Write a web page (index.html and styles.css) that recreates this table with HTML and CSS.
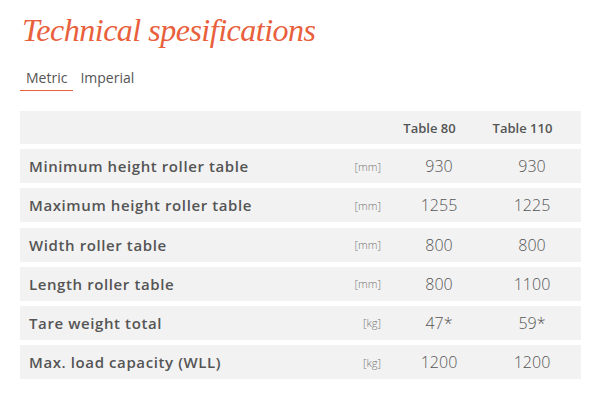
FILE: index.html
```html
<!DOCTYPE html>
<html>
<head>
<meta charset="utf-8">
<link rel="stylesheet" href="styles.css">
</head>
<body>
<div class="page">
  <h1 class="title">Technical spesifications</h1>
  <div class="tabs">
    <span class="tab active">Metric</span>
    <span class="tab">Imperial</span>
  </div>
  <div class="spec">
    <div class="row head">
      <div class="label"></div>
      <div class="unit"></div>
      <div class="val hv">Table 80</div>
      <div class="val hv">Table 110</div>
    </div>
    <div class="row">
      <div class="label">Minimum height roller table</div>
      <div class="unit">[mm]</div>
      <div class="val">930</div>
      <div class="val">930</div>
    </div>
    <div class="row">
      <div class="label">Maximum height roller table</div>
      <div class="unit">[mm]</div>
      <div class="val">1255</div>
      <div class="val">1225</div>
    </div>
    <div class="row">
      <div class="label">Width roller table</div>
      <div class="unit">[mm]</div>
      <div class="val">800</div>
      <div class="val">800</div>
    </div>
    <div class="row">
      <div class="label">Length roller table</div>
      <div class="unit">[mm]</div>
      <div class="val">800</div>
      <div class="val">1100</div>
    </div>
    <div class="row">
      <div class="label">Tare weight total</div>
      <div class="unit">[kg]</div>
      <div class="val">47*</div>
      <div class="val">59*</div>
    </div>
    <div class="row">
      <div class="label">Max. load capacity (WLL)</div>
      <div class="unit">[kg]</div>
      <div class="val">1200</div>
      <div class="val">1200</div>
    </div>
  </div>
</div>
</body>
</html>
```
FILE: styles.css
```css
html, body {
  margin: 0;
  padding: 0;
  background: #ffffff;
}
.page {
  padding: 0 25px 0 20px;
  font-family: "Open Sans", "Liberation Sans", sans-serif;
  color: #555555;
}
.title {
  margin: 0;
  padding-top: 10px;
  padding-left: 2px;
  font-family: "Liberation Serif", serif;
  font-style: italic;
  font-weight: normal;
  font-size: 32px;
  letter-spacing: -0.5px;
  line-height: 40px;
  color: #e8603c;
}
.tabs {
  display: flex;
  margin-top: 18px;
  height: 23px;
}
.tab {
  font-size: 14px;
  line-height: 19px;
  color: #555;
  padding: 0 0 0 7px;
}
.tab.active {
  padding: 0 6px 0 6px;
  border-bottom: 1.5px solid #e8603c;
}
.spec {
  margin-top: 20px;
  display: flex;
  flex-direction: column;
  gap: 5.2px;
}
.row {
  display: grid;
  grid-template-columns: 1fr auto 88px 98px;
  align-items: center;
  height: 34px;
  background: #f2f2f2;
}
.row.head {
  height: 33px;
}
.label {
  padding-left: 9px;
  font-size: 15px;
  font-weight: 600;
  letter-spacing: 0.6px;
  color: #555;
}
.unit {
  padding-right: 14px;
  font-size: 11px;
  font-weight: 300;
  color: #777;
  text-align: right;
}
.val {
  text-align: center;
  font-size: 16px;
  font-weight: 300;
  color: #555;
}
.val.hv {
  font-size: 13px;
  font-weight: 600;
  padding-right: 19px;
}
```
